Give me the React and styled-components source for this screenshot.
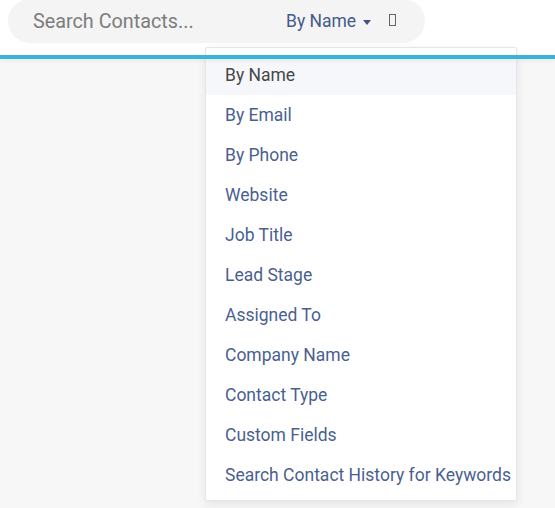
import React from "react";
import styled, { createGlobalStyle } from "styled-components";

const Global = createGlobalStyle`
  html, body { margin: 0; padding: 0; }
  body {
    background: #f7f7f7;
    font-family: Roboto, "Liberation Sans", sans-serif;
    width: 555px;
    height: 508px;
    overflow: hidden;
  }
`;

const Page = styled.div`
  position: relative;
  width: 555px;
  height: 508px;
`;

const Header = styled.header`
  height: 55px;
  background: #fff;
  display: flex;
  align-items: flex-start;
  padding-left: 8px;
`;

const Rule = styled.div`
  position: relative;
  z-index: 3;
  height: 3.5px;
  background: #38b3d9;
  box-shadow: 0 2px 4px rgba(0, 0, 0, 0.06);
`;

const SearchPill = styled.div`
  margin-top: -1px;
  width: 417px;
  height: 44px;
  border-radius: 22px;
  background: #f4f4f4;
  display: flex;
  align-items: center;
  box-sizing: border-box;
  padding-left: 25px;
`;

const SearchInput = styled.input`
  border: none;
  background: transparent;
  outline: none;
  font-family: Roboto, "Liberation Sans", sans-serif;
  font-size: 19.8px;
  color: #333;
  width: 253px;
  padding: 0;
  &::placeholder { color: #7d7d7d; }
`;

const FilterButton = styled.div`
  display: flex;
  align-items: center;
  font-size: 17.5px;
  color: #445a8c;
  gap: 7px;
`;

const Caret = styled.span`
  width: 0;
  height: 0;
  border-left: 4.5px solid transparent;
  border-right: 4.5px solid transparent;
  border-top: 5px solid #3d5385;
  margin-top: 2px;
`;

const Tofu = styled.span`
  width: 5px;
  height: 10px;
  border: 1px solid #666;
  margin-left: 18px;
  margin-top: -2px;
`;

const Menu = styled.ul`
  position: absolute;
  z-index: 2;
  left: 205px;
  top: 47px;
  width: 312px;
  margin: 0;
  padding: 7px 0 5px;
  list-style: none;
  background: #fff;
  border: 1px solid #e6e6e6;
  border-radius: 2px;
  box-shadow: 0 3px 10px rgba(0, 0, 0, 0.08);
  box-sizing: border-box;
`;

const Item = styled.li`
  height: 40px;
  display: flex;
  align-items: center;
  padding-left: 19px;
  font-size: 17.5px;
  white-space: nowrap;
  color: ${(p) => (p.$active ? "#474747" : "#4a5f91")};
  background: ${(p) => (p.$active ? "#f5f7fa" : "transparent")};
`;

const items = [
  "By Name",
  "By Email",
  "By Phone",
  "Website",
  "Job Title",
  "Lead Stage",
  "Assigned To",
  "Company Name",
  "Contact Type",
  "Custom Fields",
  "Search Contact History for Keywords",
];

export default function App() {
  return (
    <Page>
      <Global />
      <Header>
        <SearchPill>
          <SearchInput placeholder="Search Contacts..." />
          <FilterButton>
            By Name <Caret />
          </FilterButton>
          <Tofu />
        </SearchPill>
      </Header>
      <Rule />
      <Menu>
        {items.map((t, i) => (
          <Item key={t} $active={i === 0}>
            {t}
          </Item>
        ))}
      </Menu>
    </Page>
  );
}
